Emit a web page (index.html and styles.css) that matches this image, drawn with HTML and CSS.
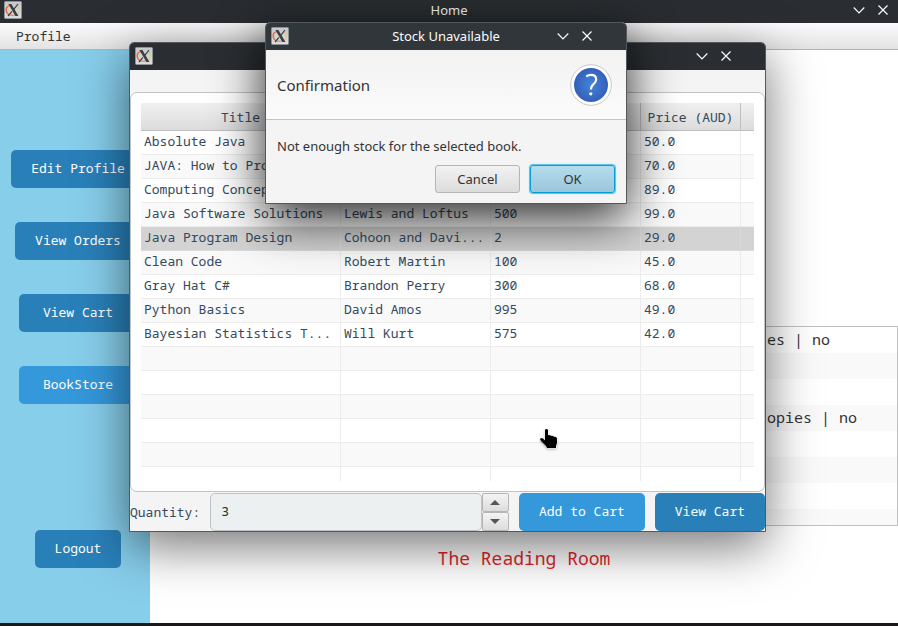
FILE: index.html
```html
<!DOCTYPE html>
<html lang="en">
<head>
<meta charset="utf-8">
<meta name="viewport" content="width=device-width, initial-scale=1">
<title>Home</title>
<link rel="stylesheet" href="styles.css">
</head>
<body>
<svg class="defs" aria-hidden="true">
  <defs>
    <linearGradient id="tile" x1="0" y1="0" x2="0" y2="1"><stop offset="0" stop-color="#c3c9cc"/><stop offset="1" stop-color="#dadddf"/></linearGradient>
    <linearGradient id="ring" x1="0" y1="0" x2="1" y2="0"><stop offset="0" stop-color="#f0602e"/><stop offset=".55" stop-color="#ee9a6a"/><stop offset="1" stop-color="#e0cfa4"/></linearGradient>
  </defs>
  <symbol id="app" viewBox="0 0 18 18">
    <rect x=".5" y=".5" width="17" height="17" rx="1" fill="url(#tile)" stroke="#8d9497"/>
    <path d="M6 4.600C3 5.200 1.900 7.600 2.300 9.800c.5 2.700 3.300 4.500 6.500 4.500 3.800 0 6.900-2 6.900-5 0-2-1-3.600-2.600-4.400" fill="none" stroke="url(#ring)" stroke-width="1.400"/>
    <path d="M4.400 3h3l7 12h-3z" fill="#3b3f42"/>
    <path d="M14 3L9.800 8.300M8 10.300L4 15" stroke="#3b3f42" stroke-width="1.200" fill="none"/>
  </symbol>
  <symbol id="down" viewBox="0 0 12 12"><path d="M.7 3.500L6 8.800l5.300-5.300" fill="none" stroke="#fcfcfc" stroke-width="1.200"/></symbol>
  <symbol id="cross" viewBox="0 0 12 12"><path d="M1.500 1.500l9 9M10.500 1.500l-9 9" fill="none" stroke="#fcfcfc" stroke-width="1.200"/></symbol>
</svg>

<header class="titlebar titlebar-home">
  <svg class="app-icon" aria-hidden="true"><use href="#app"/></svg>
  <h1 class="titlebar-text">Home</h1>
  <div class="titlebar-controls">
    <button type="button" aria-label="Minimise"><svg><use href="#down"/></svg></button>
    <button type="button" aria-label="Close"><svg><use href="#cross"/></svg></button>
  </div>
</header>
<nav class="menubar"><button type="button" class="menu-item">Profile</button></nav>

<div class="home">
  <aside class="sidebar">
    <button type="button" class="btn">Edit Profile</button>
    <button type="button" class="btn">View Orders</button>
    <button type="button" class="btn btn-wide">View Cart</button>
    <button type="button" class="btn btn-wide btn-bright">BookStore</button>
    <button type="button" class="btn btn-logout">Logout</button>
  </aside>
  <main class="main">
    <ul class="orders">
      <li>es | no</li><li></li><li></li><li>opies | no</li><li></li><li></li><li></li><li></li>
    </ul>
    <p class="brand">The Reading Room</p>
  </main>
</div>

<section class="window store" aria-label="BookStore">
  <header class="titlebar">
    <svg class="app-icon" aria-hidden="true"><use href="#app"/></svg>
    <div class="titlebar-controls">
      <button type="button" aria-label="Minimise"><svg><use href="#down"/></svg></button>
      <button type="button" aria-label="Close"><svg><use href="#cross"/></svg></button>
    </div>
  </header>
  <div class="store-body">
    <div class="panel">
      <table class="books">
        <colgroup><col class="c-title"><col class="c-author"><col class="c-stock"><col class="c-price"><col class="c-rest"></colgroup>
        <thead><tr><th>Title</th><th></th><th></th><th>Price (AUD)</th><th></th></tr></thead>
        <tbody>
          <tr><td>Absolute Java</td><td></td><td></td><td>50.0</td><td></td></tr>
          <tr><td>JAVA: How to Program</td><td></td><td></td><td>70.0</td><td></td></tr>
          <tr><td>Computing Concepts</td><td></td><td></td><td>89.0</td><td></td></tr>
          <tr><td>Java Software Solutions</td><td>Lewis and Loftus</td><td>500</td><td>99.0</td><td></td></tr>
          <tr class="selected"><td>Java Program Design</td><td>Cohoon and Davi...</td><td>2</td><td>29.0</td><td></td></tr>
          <tr><td>Clean Code</td><td>Robert Martin</td><td>100</td><td>45.0</td><td></td></tr>
          <tr><td>Gray Hat C#</td><td>Brandon Perry</td><td>300</td><td>68.0</td><td></td></tr>
          <tr><td>Python Basics</td><td>David Amos</td><td>995</td><td>49.0</td><td></td></tr>
          <tr><td>Bayesian Statistics T...</td><td>Will Kurt</td><td>575</td><td>42.0</td><td></td></tr>
          <tr><td></td><td></td><td></td><td></td><td></td></tr>
          <tr><td></td><td></td><td></td><td></td><td></td></tr>
          <tr><td></td><td></td><td></td><td></td><td></td></tr>
          <tr><td></td><td></td><td></td><td></td><td></td></tr>
          <tr><td></td><td></td><td></td><td></td><td></td></tr>
          <tr class="partial"><td></td><td></td><td></td><td></td><td></td></tr>
        </tbody>
      </table>
    </div>
    <form class="actions">
      <label for="qty">Quantity:</label>
      <div class="spinner">
        <input id="qty" type="text" inputmode="numeric" value="3">
        <div class="steps">
          <button type="button" aria-label="Increase"><svg viewBox="0 0 8 4"><path d="M0 4L4 0l4 4z"/></svg></button>
          <button type="button" aria-label="Decrease"><svg viewBox="0 0 8 4"><path d="M0 0h8L4 4z"/></svg></button>
        </div>
      </div>
      <button type="button" class="btn btn-bright">Add to Cart</button>
      <button type="button" class="btn">View Cart</button>
    </form>
  </div>
</section>

<section class="window dialog" role="dialog" aria-labelledby="dialog-title">
  <header class="titlebar">
    <svg class="app-icon" aria-hidden="true"><use href="#app"/></svg>
    <h2 class="titlebar-text" id="dialog-title">Stock Unavailable</h2>
    <div class="titlebar-controls">
      <button type="button" aria-label="Minimise"><svg><use href="#down"/></svg></button>
      <button type="button" aria-label="Close"><svg><use href="#cross"/></svg></button>
    </div>
  </header>
  <div class="dialog-head">
    <p>Confirmation</p>
    <svg class="question" viewBox="0 0 42 42" aria-hidden="true">
      <defs><radialGradient id="blue"><stop offset="0" stop-color="#4285d9"/><stop offset="1" stop-color="#355fb9"/></radialGradient></defs>
      <circle cx="21" cy="21" r="20.300" fill="#fff" stroke="#c9c9c9"/>
      <circle cx="21" cy="21" r="17" fill="url(#blue)"/>
      <path d="M16.300 12.500c1.500-1.100 3-1.600 4.700-1.600 3.200 0 5.200 1.700 5.200 4.500 0 2.300-1.300 3.600-2.900 5-1.700 1.500-2.500 2.500-2.500 5.200" fill="none" stroke="#fff" stroke-width="2.200"/>
      <circle cx="20.800" cy="29.800" r="1.600" fill="#fff"/>
    </svg>
  </div>
  <p class="dialog-message">Not enough stock for the selected book.</p>
  <div class="dialog-actions">
    <button type="button">Cancel</button>
    <button type="button" class="default">OK</button>
  </div>
</section>

<svg class="pointer" viewBox="0 0 20 22" aria-hidden="true">
  <path d="M6 2.500C6 .5 9 .5 9 2.500V7l2 .3 1 .5 2 .2 1 .8 2 .3 1 1.200V15l-1 3v2H8l-1-2-5-5-1-2 1-1 2 .5 2 2z" fill="#000" stroke="#fff" stroke-width="1" paint-order="stroke"/>
</svg>
</body>
</html>
```
FILE: styles.css
```css
* { box-sizing: border-box; }

body {
  margin: 0;
  min-height: 100vh;
  display: flex;
  flex-direction: column;
  position: relative;
  overflow: hidden;
  border-bottom: 3px solid #1b1819;
  background: #fff;
  font: 13px/20px "Noto Sans", sans-serif;
  color: #333;
}

h1, h2, p, ul { margin: 0; padding: 0; font-weight: normal; }
button, input { font: inherit; color: inherit; }
.defs { position: absolute; width: 0; height: 0; }

.titlebar {
  display: grid;
  grid-template-columns: 1fr auto 1fr;
  align-items: center;
  height: 27px;
  padding: 0 5px 2px;
  background: #2a2e32;
  color: #fcfcfc;
}
.titlebar-home { height: 23px; padding: 0 4px 5px; }
.titlebar-text { grid-column: 2; font-size: 13px; line-height: 20px; }
.app-icon { width: 18px; height: 18px; }
.titlebar-controls {
  grid-column: 3;
  justify-self: end;
  display: flex;
  gap: 12px;
  padding-right: 28px;
}
.titlebar-home .titlebar-controls { padding-right: 5px; }
.titlebar-controls button {
  display: flex;
  padding: 0;
  border: 0;
  background: none;
}
.titlebar-controls svg { width: 12px; height: 12px; }

.menubar {
  display: flex;
  height: 27px;
  padding: 0 16px;
  border-bottom: 1px solid #b5b5b5;
  background: linear-gradient(#fbfbfb, #e3e3e3);
}

.menu-item, .btn, .books, .actions, .orders, .brand {
  font-family: "Noto Sans Mono", "DejaVu Sans Mono", monospace;
}
.menu-item { padding: 0; border: 0; background: none; font-size: 13px; }

.home { flex: 1; display: flex; }
.sidebar {
  width: 150px;
  padding: 100px 0 55px 6px;
  display: flex;
  flex-direction: column;
  align-items: center;
  gap: 34px;
  background: #87ceeb;
}
.btn {
  height: 38px;
  padding: 0 20px 2px;
  border: 0;
  border-radius: 5px;
  background: #2980b9;
  color: #fff;
  font-size: 13px;
  white-space: nowrap;
}
.btn-wide { min-width: 118px; }
.btn-bright { background: #3498db; }
.btn-logout { margin-top: auto; }

.main {
  flex: 1;
  display: flex;
  flex-direction: column;
  justify-content: flex-end;
  gap: 20px;
  padding-bottom: 53px;
}
.orders {
  height: 200px;
  overflow: hidden;
  border: 1px solid #c0c0c0;
  list-style: none;
  font-size: 15px;
  line-height: 24px;
}
.orders li { height: 26px; padding-left: 616px; white-space: nowrap; }
.orders li:nth-child(even) { background: #f9f9f9; }
.brand { color: #e0262c; font-size: 18px; line-height: 24px; text-align: center; }

.window {
  position: absolute;
  border: 1px solid #54585b;
  border-radius: 5px 5px 0 0;
  background: #f4f4f4;
  box-shadow: 0 14px 50px rgba(0, 0, 0, .55);
}
.window .titlebar { border-radius: 4px 4px 0 0; }

.store { left: 129px; top: 42px; }
.store-body { padding-top: 22px; }
.panel {
  padding: 10px;
  border: 1px solid #bdc3c7;
  border-radius: 7px;
  background: #fff;
}
.books {
  table-layout: fixed;
  width: 613px;
  border-collapse: separate;
  border-spacing: 0;
  color: #34495e;
  font-size: 13px;
}
.c-title { width: 200px; }
.c-author, .c-stock { width: 150px; }
.c-price { width: 100px; }
.books th {
  height: 28px;
  padding: 0;
  border-right: 1px solid #bfbfbf;
  border-bottom: 1px solid #bfbfbf;
  background: linear-gradient(#f0f0f0, #dcdcdc);
  font-weight: normal;
}
.books td {
  height: 24px;
  padding: 0 3px 3px;
  border-right: 1px solid #ececec;
  border-bottom: 1px solid #ececec;
  white-space: nowrap;
  overflow: hidden;
  line-height: 20px;
}
.books th:last-child, .books td:last-child { border-right: 0; }
.books tbody tr:nth-child(even) { background: #f9f9f9; }
.books tbody .selected { background: #d3d3d3; }
.books .selected td { border-color: #dadada; }
.books .partial td { height: 14px; border-bottom: 0; }

.actions {
  display: flex;
  align-items: center;
  gap: 10px;
  padding-top: 1px;
  color: #34495e;
}
.spinner { flex: 1; display: flex; align-self: stretch; }
.spinner input {
  flex: 1;
  min-width: 0;
  padding: 0 10px 2px;
  border: 1px solid #bdc3c7;
  border-radius: 5px;
  background: #ecf0f1;
  color: #333;
}
.steps { display: grid; grid-template-rows: 1fr 1fr; width: 27px; }
.steps button {
  display: flex;
  align-items: center;
  justify-content: center;
  padding: 0;
  border: 1px solid #b5b5b5;
  border-radius: 2px;
  background: linear-gradient(#f4f4f4, #dcdcdc);
}
.steps svg { width: 10px; height: 5px; fill: #555; }

.dialog { left: 265px; top: 22px; min-width: 362px; box-shadow: 0 14px 50px rgba(0, 0, 0, .85); }
.dialog .titlebar { background: #31363b; }
.dialog-head {
  display: flex;
  align-items: center;
  justify-content: space-between;
  height: 70px;
  padding: 0 14px 0 11px;
  border-bottom: 1px solid #c4c4c4;
  background: linear-gradient(#f2f2f2, #fbfbfb);
  font-size: 15px;
}
.question { width: 42px; height: 42px; }
.dialog-message { padding: 16px 11px 9px; }
.dialog-actions {
  display: flex;
  justify-content: flex-end;
  gap: 10px;
  padding: 0 11px 10px;
}
.dialog-actions button {
  width: 85px;
  height: 28px;
  padding: 0;
  border: 1px solid #b5b5b5;
  border-radius: 3px;
  background: linear-gradient(#f2f2f2, #dcdcdc);
}
.dialog-actions .default {
  border-color: #039ed3;
  background: linear-gradient(#b4dcec, #9cc6dc);
  box-shadow: 0 0 1px 1px #4fc0e8;
}

.pointer {
  position: absolute;
  left: 539px;
  top: 428px;
  width: 20px;
  height: 22px;
  filter: drop-shadow(0 1px 1px rgba(0, 0, 0, .3));
}
```
